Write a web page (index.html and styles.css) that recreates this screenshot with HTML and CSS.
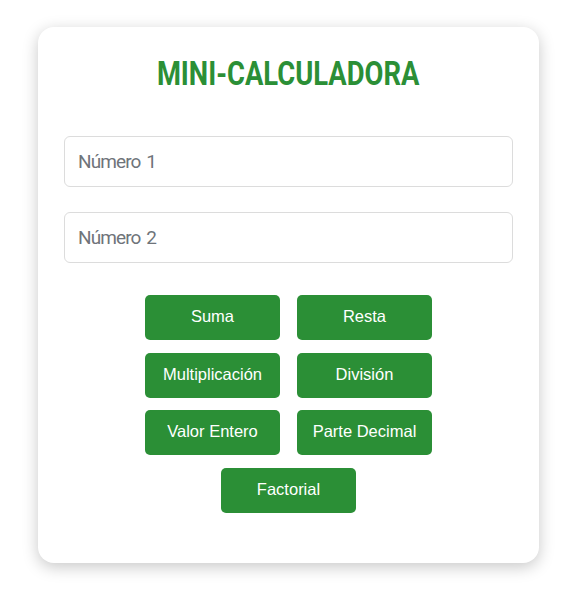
FILE: index.html
```html
<!DOCTYPE html>
<html lang="es">
<head>
<meta charset="utf-8">
<title>Mini-Calculadora</title>
<link rel="stylesheet" href="styles.css">
</head>
<body>
<main class="card">
  <h1 class="title"><span class="title-text">MINI-CALCULADORA</span></h1>
  <div class="fields">
    <input class="field" type="text" placeholder="Número 1">
    <input class="field" type="text" placeholder="Número 2">
  </div>
  <div class="buttons">
    <button class="btn">Suma</button>
    <button class="btn">Resta</button>
    <button class="btn">Multiplicación</button>
    <button class="btn">División</button>
    <button class="btn">Valor Entero</button>
    <button class="btn">Parte Decimal</button>
    <button class="btn">Factorial</button>
  </div>
</main>
</body>
</html>
```
FILE: styles.css
```css
html, body {
  margin: 0;
  padding: 0;
  background: #ffffff;
}
body {
  padding: 27px 32px 42px 38px;
  font-family: "Liberation Sans", Arial, sans-serif;
}
.card {
  width: 501px;
  height: 536px;
  box-sizing: border-box;
  background: #fff;
  border-radius: 16px;
  box-shadow: 0 4px 16px rgba(0, 0, 0, 0.22);
  padding: 27px 26px 0 26px;
}
.title {
  margin: 0;
  text-align: center;
  font-family: Roboto, sans-serif;
  font-weight: 700;
  font-size: 33px;
  line-height: 40px;
  color: #2b8f36;
}
.title-text {
  display: inline-block;
  transform: scaleX(0.83);
}
.fields {
  margin-top: 42px;
  display: flex;
  flex-direction: column;
  gap: 25px;
}
.field {
  box-sizing: border-box;
  width: 100%;
  height: 51px;
  border: 1px solid #dcdcdc;
  border-radius: 6px;
  padding: 0 13px;
  font-family: Roboto, sans-serif;
  font-size: 19px;
  letter-spacing: -0.9px;
  word-spacing: 2px;
  color: #333;
  outline: none;
}
.field::placeholder {
  color: #6f747a;
}
.buttons {
  margin: 32px auto 0;
  width: 287px;
  display: flex;
  flex-wrap: wrap;
  justify-content: center;
  column-gap: 17px;
  row-gap: 12.5px;
}
.btn {
  width: 135px;
  height: 45px;
  border: none;
  border-radius: 5px;
  background: #2b8f36;
  color: #fff;
  font-family: "Liberation Sans", Arial, sans-serif;
  font-size: 16.5px;
  padding: 0 0 2px;
  cursor: pointer;
}
```
